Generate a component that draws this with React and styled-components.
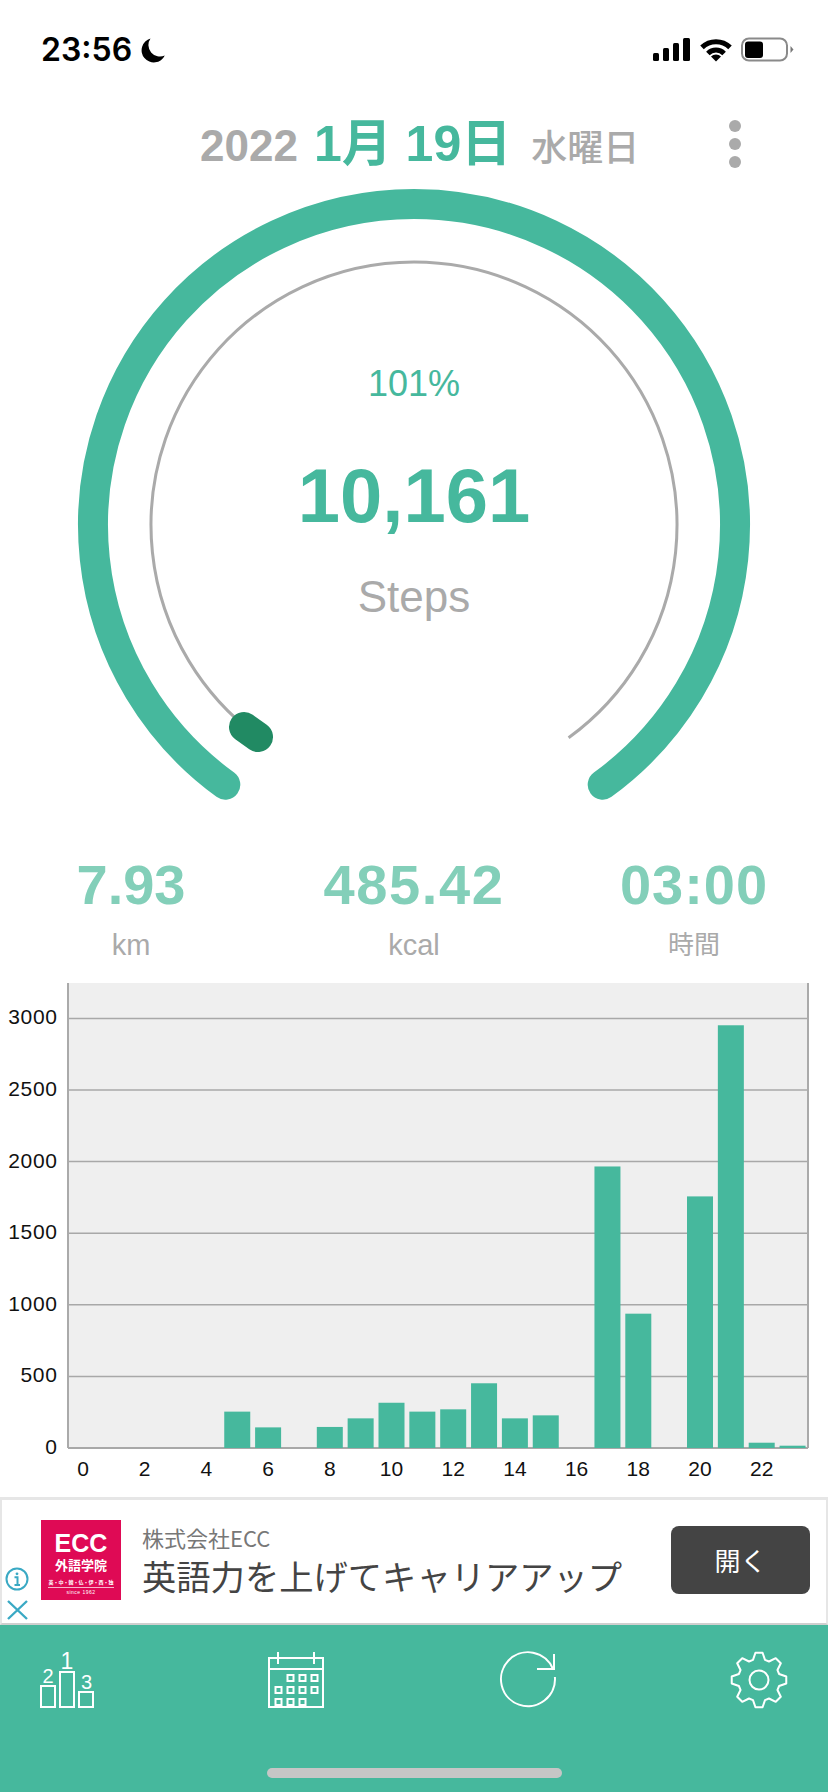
import React from "react";
import styled, { createGlobalStyle } from "styled-components";

const GREEN = "#46b89d";
const GREY = "#aaaaaa";
const SANS = '"Liberation Sans", "Noto Sans CJK JP", sans-serif';
const JP = '"Noto Sans CJK JP", "Liberation Sans", sans-serif';

const GlobalStyle = createGlobalStyle`
  html, body {
    margin: 0;
    padding: 0;
    background: #fff;
  }
  body {
    font-family: ${SANS};
  }
`;

const Page = styled.div`
  width: 828px;
  height: 1792px;
  display: flex;
  flex-direction: column;
  overflow: hidden;
  background: #fff;
`;

const StatusBar = styled.div`
  height: 85px;
  flex: none;
  box-sizing: border-box;
  padding: 33px 33px 0 41px;
  display: flex;
  align-items: flex-start;
  justify-content: space-between;
`;

const StatusGroup = styled.div`
  display: flex;
  align-items: center;
  gap: ${(p) => p.$gap || 0}px;
  height: 34px;
`;

const Clock = styled.span`
  font-family: Inter, "Liberation Sans", sans-serif;
  font-size: 32px;
  line-height: 34px;
  font-weight: 600;
  color: #000;
`;

const Header = styled.header`
  height: 90px;
  flex: none;
  box-sizing: border-box;
  padding: 0 87px 0 200px;
  display: flex;
  align-items: flex-start;
  justify-content: space-between;
`;

const DateLine = styled.div`
  display: flex;
  align-items: baseline;
  margin-top: 31px;
  font-weight: 700;
  line-height: 56px;
  color: ${GREY};
  white-space: nowrap;
`;

const Year = styled.span`
  font-size: 44px;
  font-family: ${SANS};
`;

const Day = styled.span`
  font-size: 50px;
  margin-left: 16px;
  color: ${GREEN};
  font-family: ${SANS};
`;

const Weekday = styled.span`
  font-size: 36px;
  margin-left: 20px;
  font-family: ${JP};
  font-weight: 500;
`;

const MoreButton = styled.div`
  display: flex;
  flex-direction: column;
  gap: 6px;
  margin-top: 35px;
`;

const Dot = styled.span`
  width: 12px;
  height: 12px;
  border-radius: 50%;
  background: ${GREY};
`;

const Gauge = styled.section`
  position: relative;
  height: 675px;
  flex: none;

  svg {
    display: block;
  }
`;

const GaugeText = styled.div`
  position: absolute;
  inset: 0;
  display: flex;
  flex-direction: column;
  align-items: center;
  padding-top: 187px;
`;

const Percent = styled.div`
  font-size: 36px;
  line-height: 44px;
  color: ${GREEN};
`;

const StepCount = styled.div`
  font-size: 76px;
  line-height: 80px;
  font-weight: 700;
  color: ${GREEN};
  margin-top: 50px;
`;

const StepLabel = styled.div`
  font-size: 44px;
  line-height: 52px;
  color: ${GREY};
  margin-top: 35px;
`;

const Stats = styled.section`
  flex: none;
  height: 133px;
  box-sizing: border-box;
  padding-top: 7px;
  display: grid;
  grid-template-columns: 262px 304px 256px;
`;

const Stat = styled.div`
  display: flex;
  flex-direction: column;
  align-items: center;
`;

const StatValue = styled.div`
  font-size: 56px;
  line-height: 56px;
  font-weight: 700;
  letter-spacing: ${(p) => p.$track || 0}px;
  color: #83cfb9;
`;

const StatLabel = styled.div`
  font-size: ${(p) => p.$size || 29}px;
  line-height: 36px;
  margin-top: 14px;
  color: ${GREY};
`;

const ChartSvg = styled.svg`
  display: block;
  flex: none;

  text {
    font-family: ${SANS};
    font-size: 21px;
    fill: #111;
  }
`;

const AdBanner = styled.aside`
  position: relative;
  flex: none;
  height: 128px;
  box-sizing: border-box;
  border: 2px solid #e6e6e6;
  border-top-width: 3px;
  border-bottom-color: #cfcfcf;
  background: #fff;
  display: flex;
  align-items: center;
  padding: 0 16px 4px 39px;
`;

const AdLogo = styled.div`
  width: 80px;
  height: 80px;
  flex: none;
  background: #df0a55;
  color: #fff;
  display: flex;
  flex-direction: column;
  align-items: center;
  padding-top: 12px;
  box-sizing: border-box;
`;

const LogoMark = styled.div`
  font-size: 25px;
  line-height: 22px;
  font-weight: 700;
`;

const LogoName = styled.div`
  font-family: ${JP};
  font-size: 13px;
  line-height: 18px;
  font-weight: 700;
  margin-top: 2px;
`;

const LogoTiny = styled.div`
  font-family: ${JP};
  font-size: 5px;
  line-height: 8px;
  font-weight: 700;
  margin-top: 4px;
  padding-bottom: 1px;
  border-bottom: 1px solid #f7b5cc;
  white-space: nowrap;
`;

const LogoSince = styled.div`
  font-size: 5px;
  line-height: 8px;
  letter-spacing: 0.5px;
`;

const AdCopy = styled.div`
  margin-left: 21px;
  display: flex;
  flex-direction: column;
  font-family: ${JP};
  white-space: nowrap;
`;

const Advertiser = styled.div`
  font-size: 22px;
  line-height: 30px;
  color: #777;
`;

const Headline = styled.div`
  font-size: 34.3px;
  line-height: 46px;
  color: #444;
`;

const OpenButton = styled.div`
  margin-left: auto;
  width: 139px;
  height: 68px;
  flex: none;
  border-radius: 8px;
  background: #444;
  color: #fff;
  font-family: ${JP};
  font-size: 26px;
  display: flex;
  align-items: center;
  justify-content: center;
`;

const AdChoices = styled.div`
  position: absolute;
  left: 3px;
  bottom: 3px;
  display: flex;
  flex-direction: column;
  gap: 9px;
`;

const TabBar = styled.nav`
  flex: 1;
  background: ${GREEN};
  display: flex;
  flex-direction: column;
  padding-top: 26px;
`;

const TabRow = styled.div`
  display: flex;
  align-items: flex-start;
  justify-content: space-between;
  padding: 0 40px;
`;

const HomeIndicator = styled.div`
  width: 295px;
  height: 10px;
  border-radius: 5px;
  background: #c6c6c6;
  margin: 59px auto 0;
`;

const hourly = [0, 0, 0, 0, 0, 254, 144, 0, 147, 207, 316, 254, 270, 452, 207, 228, 0, 1966, 938, 0, 1757, 2952, 37, 16];
const ticks = [0, 500, 1000, 1500, 2000, 2500, 3000];

const Chart = () => {
  const base = 465;
  const scale = 71.6 / 500;
  return (
    <ChartSvg width="828" height="514" viewBox="0 0 828 514">
      <rect x="68" y="0" width="740" height={base} fill="#efefef" />
      {ticks.map((t) => (
        <g key={t}>
          {t > 0 && <line x1="68" x2="808" y1={base - t * scale} y2={base - t * scale} stroke="#a8a8a8" strokeWidth="1.5" />}
          <text x="57" y={base - t * scale + 6} textAnchor="end" textLength={String(t).length * 12.2} lengthAdjust="spacing">{t}</text>
        </g>
      ))}
      <line x1="68" x2="68" y1="0" y2={base} stroke="#aaa" strokeWidth="2" />
      <line x1="808" x2="808" y1="0" y2={base} stroke="#aaa" strokeWidth="2" />
      <line x1="68" x2="808" y1={base} y2={base} stroke="#a8a8a8" strokeWidth="2" />
      {hourly.map((v, i) =>
        v > 0 ? <rect key={i} x={70 + i * 30.85} y={base - v * scale} width="26" height={v * scale} fill={GREEN} /> : null
      )}
      {hourly.map((_, i) =>
        i % 2 === 0 ? (
          <text key={i} x={83 + i * 30.85} y="493" textAnchor="middle">{i}</text>
        ) : null
      )}
    </ChartSvg>
  );
};

const SignalIcon = () => (
  <svg width="38" height="24" viewBox="0 0 38 24">
    <rect x="0" y="15" width="6" height="8" rx="1.5" fill="#000" />
    <rect x="10" y="10" width="6" height="13" rx="1.5" fill="#000" />
    <rect x="20" y="5" width="6" height="18" rx="1.5" fill="#000" />
    <rect x="30" y="0" width="7" height="23" rx="1.5" fill="#000" />
  </svg>
);

const WifiIcon = () => (
  <svg width="32" height="24" viewBox="0 0 32 24">
    <path d="M2 9.4A20 20 0 0 1 30 9.4" fill="none" stroke="#000" strokeWidth="5" />
    <path d="M7.9 15.4A11.5 11.5 0 0 1 24.1 15.4" fill="none" stroke="#000" strokeWidth="5" />
    <path d="M16 23.5L11 18.5A7 7 0 0 1 21 18.5Z" fill="#000" />
  </svg>
);

const BatteryIcon = () => (
  <svg width="54" height="26" viewBox="0 0 54 26">
    <rect x="1" y="1.5" width="45" height="22" rx="7" fill="none" stroke="#8a8a8a" strokeWidth="2" />
    <rect x="4" y="4.5" width="18" height="16.5" rx="3" fill="#000" />
    <path d="M49.5 9L52.5 12.5L49.5 16Z" fill="#777" />
  </svg>
);

const MoonIcon = () => (
  <svg width="24" height="25" viewBox="0 0 24 25">
    <path d="M9.5 0.5A12.2 12.2 0 1 0 23.8 17.5A11.5 11.5 0 0 1 9.5 0.5Z" fill="#000" />
  </svg>
);

const GaugeDial = () => (
  <svg width="828" height="675" viewBox="0 0 828 675">
    <path d="M225.3 609.7A321 321 0 1 1 602.7 609.7" fill="none" stroke={GREEN} strokeWidth="30" strokeLinecap="round" />
    <path d="M259.4 562.8A263 263 0 1 1 568.6 562.8" fill="none" stroke={GREY} strokeWidth="3" />
    <line x1="244" y1="552" x2="258" y2="562" stroke="#218a63" strokeWidth="30" strokeLinecap="round" />
  </svg>
);

const PodiumIcon = () => (
  <svg width="54" height="58" viewBox="0 0 54 58" fill="none" stroke="#fff" strokeWidth="2">
    <rect x="1" y="35" width="14" height="21" />
    <rect x="20" y="21" width="14" height="35" />
    <rect x="39" y="41" width="14" height="15" />
    <text x="27" y="18" textAnchor="middle" fontSize="23" fill="#fff" stroke="none" fontFamily={SANS}>1</text>
    <text x="8" y="32" textAnchor="middle" fontSize="20" fill="#fff" stroke="none" fontFamily={SANS}>2</text>
    <text x="46.5" y="38" textAnchor="middle" fontSize="20" fill="#fff" stroke="none" fontFamily={SANS}>3</text>
  </svg>
);

const calendarCells = [
  [19, 0], [31, 0], [43, 0],
  [7, 12], [19, 12], [31, 12], [43, 12],
  [7, 24], [19, 24], [31, 24],
];

const CalendarIcon = () => (
  <svg width="56" height="58" viewBox="0 0 56 58" fill="none" stroke="#fff" strokeWidth="2">
    <rect x="1" y="7" width="54" height="49" />
    <path d="M1 18H55M10 1V13M46 1V13" />
    {calendarCells.map(([x, y]) => (
      <rect key={`${x}-${y}`} x={x + 0.5} y={y + 24} width="6" height="6" />
    ))}
  </svg>
);

const ReloadIcon = () => (
  <svg width="57" height="58" viewBox="0 0 57 58" fill="none" stroke="#fff" strokeWidth="2">
    <path d="M54 18A27 27 0 1 0 55.9 26" />
    <path d="M55 3V18H38" />
  </svg>
);

// 8 tooth gear outline, built from polar points
const gearPath = (() => {
  const cx = 29;
  const cy = 29;
  const pts = [];
  for (let i = 0; i < 8; i++) {
    const a = (i * Math.PI) / 4 - Math.PI / 2;
    [[21, -0.29], [27.5, -0.13], [27.5, 0.13], [21, 0.29]].forEach(([r, d]) => {
      pts.push(`${(cx + r * Math.cos(a + d)).toFixed(2)} ${(cy + r * Math.sin(a + d)).toFixed(2)}`);
    });
  }
  return `M${pts.join("L")}Z`;
})();

const GearIcon = () => (
  <svg width="58" height="58" viewBox="0 0 58 58" fill="none" stroke="#fff" strokeWidth="2" strokeLinejoin="round">
    <path d={gearPath} />
    <circle cx="29" cy="29" r="9.5" />
  </svg>
);

const InfoIcon = () => (
  <svg width="24" height="24" viewBox="0 0 24 24" fill="none" stroke="#3aa9c4" strokeWidth="2">
    <circle cx="12" cy="12" r="10.5" />
    <circle cx="12" cy="6.8" r="1.4" fill="#3aa9c4" stroke="none" />
    <path d="M9.5 10.2H12.5V18M9.5 18H15" />
  </svg>
);

const CloseIcon = () => (
  <svg width="24" height="20" viewBox="0 0 24 20" fill="none" stroke="#3aa9c4" strokeWidth="2.4">
    <path d="M3 1L22 19M22 1L3 19" />
  </svg>
);

export default function App() {
  return (
    <Page>
      <GlobalStyle />
      <StatusBar>
        <StatusGroup $gap={9}>
          <Clock>23:56</Clock>
          <MoonIcon />
        </StatusGroup>
        <StatusGroup $gap={9}>
          <SignalIcon />
          <WifiIcon />
          <BatteryIcon />
        </StatusGroup>
      </StatusBar>

      <Header>
        <DateLine>
          <Year>2022</Year>
          <Day>1月 19日</Day>
          <Weekday>水曜日</Weekday>
        </DateLine>
        <MoreButton>
          <Dot />
          <Dot />
          <Dot />
        </MoreButton>
      </Header>

      <Gauge>
        <GaugeDial />
        <GaugeText>
          <Percent>101%</Percent>
          <StepCount>10,161</StepCount>
          <StepLabel>Steps</StepLabel>
        </GaugeText>
      </Gauge>

      <Stats>
        <Stat>
          <StatValue>7.93</StatValue>
          <StatLabel>km</StatLabel>
        </Stat>
        <Stat>
          <StatValue $track={1.6}>485.42</StatValue>
          <StatLabel>kcal</StatLabel>
        </Stat>
        <Stat>
          <StatValue $track={1}>03:00</StatValue>
          <StatLabel $size={26}>時間</StatLabel>
        </Stat>
      </Stats>

      <Chart />

      <AdBanner>
        <AdLogo>
          <LogoMark>ECC</LogoMark>
          <LogoName>外語学院</LogoName>
          <LogoTiny>英・中・韓・仏・伊・西・独</LogoTiny>
          <LogoSince>since 1962</LogoSince>
        </AdLogo>
        <AdCopy>
          <Advertiser>株式会社ECC</Advertiser>
          <Headline>英語力を上げてキャリアアップ</Headline>
        </AdCopy>
        <OpenButton>開く</OpenButton>
        <AdChoices>
          <InfoIcon />
          <CloseIcon />
        </AdChoices>
      </AdBanner>

      <TabBar>
        <TabRow>
          <PodiumIcon />
          <CalendarIcon />
          <ReloadIcon />
          <GearIcon />
        </TabRow>
        <HomeIndicator />
      </TabBar>
    </Page>
  );
}
